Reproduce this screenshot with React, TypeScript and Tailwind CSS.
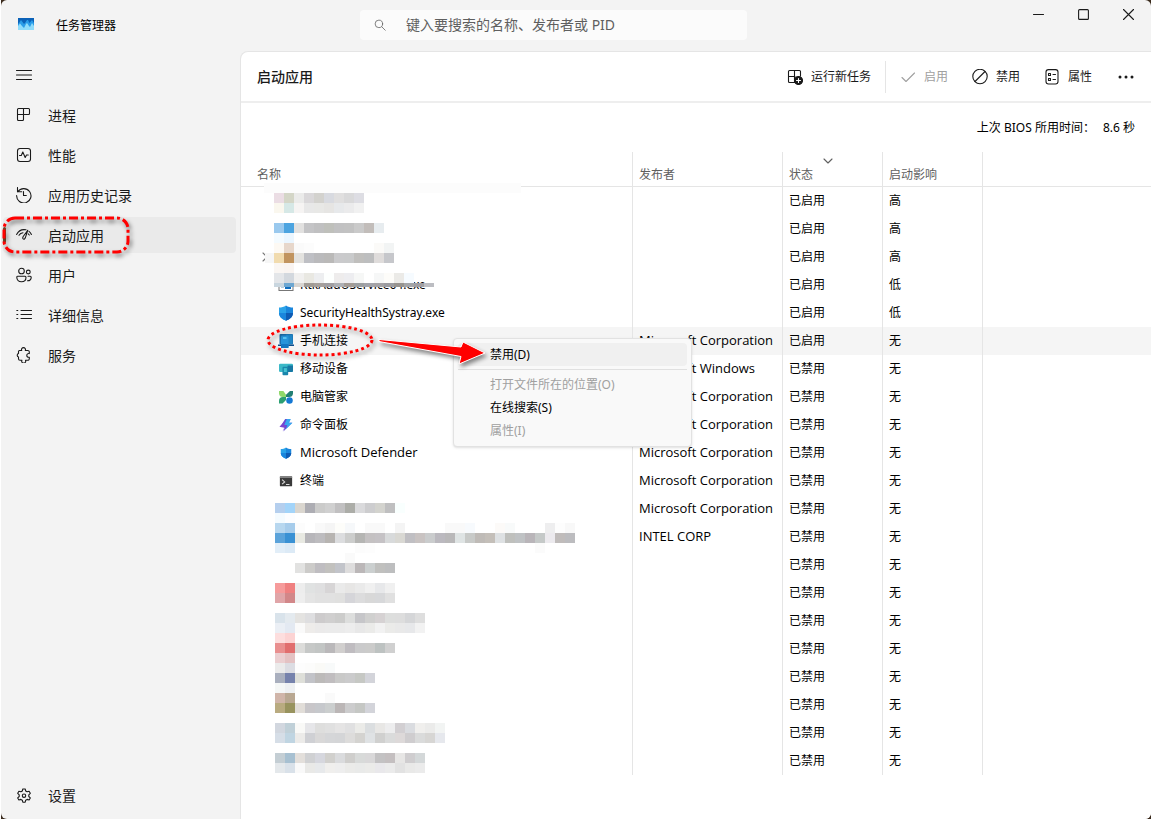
import type { ReactNode } from "react";

const stroke = {
  fill: "none",
  stroke: "currentColor",
  strokeWidth: 1.1,
  strokeLinecap: "round" as const,
  strokeLinejoin: "round" as const,
};

const Icon = ({ children, className = "size-4" }: { children: ReactNode; className?: string }) => (
  <svg viewBox="0 0 16 16" className={`shrink-0 ${className}`} aria-hidden="true" {...stroke}>
    {children}
  </svg>
);

const navItems = [
  {
    label: "进程",
    icon: <path d="M2.5 1.5h10a1 1 0 0 1 1 1v4a1 1 0 0 1-1 1h-11M7.5 1.5v11a1 1 0 0 1-1 1h-4a1 1 0 0 1-1-1v-10a1 1 0 0 1 1-1" />,
  },
  {
    label: "性能",
    icon: (
      <>
        <rect x="1.5" y="1.5" width="13" height="13" rx="2.5" />
        <path d="M3.5 8.5h1.8L6.8 5l2.4 5.5 1.3-2.5h1.8" />
      </>
    ),
  },
  {
    label: "应用历史记录",
    icon: (
      <>
        <path d="M1.5 .5v4.300h4.300M1.8 4.8A7.200 7.200 0 1 1 .6 8.500" />
        <path d="M7.5 4.500v4h2.800" />
      </>
    ),
  },
  {
    label: "启动应用",
    active: true,
    icon: (
      <>
        <path d="M.6 7.500A8.800 8.800 0 0 1 10 2.800M13 4.300A8.800 8.800 0 0 1 15.400 7.500M3 8.300A5.500 5.500 0 0 1 7 5.800" />
        <path d="M11.800 3.200 7.200 9.500c-.8 1.300-.5 2.300.2 2.600.8.300 1.500-.2 1.900-1.300z" />
        <path d="M12.200 6.800l1.100 1.200" />
      </>
    ),
  },
  {
    label: "用户",
    icon: (
      <>
        <circle cx="5.5" cy="4" r="2.8" />
        <circle cx="12.3" cy="5" r="1.9" />
        <path d="M2 9.2h7a1 1 0 0 1 1 1c0 3-1.700 4.600-4.500 4.600S.8 13.200.8 10.200A1 1 0 0 1 2 9.200zM12 9.200h2.200a1 1 0 0 1 1 1c0 2.200-1.200 3.600-3.700 3.600" />
      </>
    ),
  },
  {
    label: "详细信息",
    icon: <path d="M5 3.500h10.500M5 7.500h10.500M5 11.500h10.500M.8 3.500h1M.8 7.500h1M.8 11.500h1" />,
  },
  {
    label: "服务",
    icon: <path d="M3.500 3.500h2.200a2 2 0 1 1 3.600 0h2.500a1.500 1.500 0 0 1 1.500 1.500v1.600a1.900 1.900 0 1 0 0 3.600v1.600a1.500 1.500 0 0 1-1.500 1.500H9.500a2 2 0 1 1-3.600 0H4a1.500 1.500 0 0 1-1.500-1.500V10a1.900 1.900 0 0 1 0-3.600V4.500a1 1 0 0 1 1-1z" />,
  },
];

const Shield = ({ className }: { className: string }) => (
  <svg viewBox="0 0 16 16" className={className} aria-hidden="true">
    <path d="M8 .5C6 2 3.500 2.600 1 2.600V8c0 3.600 3 6.300 7 7.700z" fill="#2ba3e8" />
    <path d="M8 .5c2 1.500 4.500 2.100 7 2.100V8c0 3.600-3 6.300-7 7.700z" fill="#1b86dc" />
    <path d="M1 8h7v7.700C4 14.300 1 11.600 1 8z" fill="#1b86dc" />
    <path d="M8 8h7c0 3.600-3 6.300-7 7.700z" fill="#0f5cb4" />
  </svg>
);

const appIcons: Record<string, ReactNode> = {
  exe: (
    <svg viewBox="0 0 16 16" className="size-4" aria-hidden="true">
      <rect x="1" y="1" width="14" height="12.500" fill="#fff" stroke="#777" />
      <rect x="3" y="4" width="3" height="7" fill="#b8cfe0" />
      <rect x="7" y="4" width="6" height="8" fill="#0f6cbd" />
    </svg>
  ),
  security: <Shield className="size-4" />,
  defender: <Shield className="size-3" />,
  phone: (
    <svg viewBox="0 0 16 16" className="size-4" aria-hidden="true">
      <rect x="1.500" y="1" width="13.500" height="10.500" rx="1" fill="#1c6fae" />
      <path d="M8 1.500h6.500V11H8z" fill="#1f86c6" />
      <path d="M0 11.500h16V13H0z" fill="#0e4f8c" />
      <rect x="3" y="2.500" width="7.500" height="12.500" rx="1" fill="#2794da" />
      <rect x="5" y="4" width="3.500" height="2" fill="#59c3f2" />
      <path d="M3 11h7.500v4H3z" fill="#1377c2" />
    </svg>
  ),
  mobile: (
    <svg viewBox="0 0 16 16" className="size-3.5" aria-hidden="true">
      <rect x="0" y="2" width="16" height="9.500" rx="1.500" fill="#3cb9c8" />
      <path d="M10 4h6v6a1.500 1.500 0 0 1-1.500 1.500H8z" fill="#1878a4" />
      <rect x="4" y="5.500" width="6.500" height="9.500" rx="1" fill="#1986ac" />
      <rect x="5.500" y="7" width="3.500" height="4.500" fill="#45c3d0" />
    </svg>
  ),
  manager: (
    <svg viewBox="0 0 16 16" className="size-3.5" aria-hidden="true">
      <path d="M0 1h5l3 4.500v2.600H4.500A4.500 4.500 0 0 1 0 4z" fill="#8fd86a" />
      <path d="M16 1h-3.500L8 5.500v2.600h3.500A4.500 4.500 0 0 0 16 4z" fill="#237f74" />
      <path d="M0 15.500V12.500a4.500 4.500 0 0 1 4.500-4.500H8v3.500l-4 4z" fill="#2b9f72" />
      <circle cx="12" cy="12" r="3.700" fill="#1478d4" />
    </svg>
  ),
  palette: (
    <svg viewBox="0 0 16 16" className="size-3.5" aria-hidden="true">
      <path d="M7 1h6l-2 4.500h4L5 15.500l2-5.500H1.500z" fill="#6350d8" />
      <path d="M9 1h4.500l-2 4.500h4l-7.500 7L9.500 8H6z" fill="#38a8ee" />
      <path d="M.5 10 7 3 5.500 8.500h3L4 15.500 6 11z" fill="#7b45cf" />
    </svg>
  ),
  terminal: (
    <svg viewBox="0 0 16 16" className="size-3.5" aria-hidden="true">
      <rect x="1" y="2.500" width="14" height="11.500" rx="1" fill="#3a3a3a" />
      <path d="M1 2.500h14v2H1z" fill="#888" />
      <path d="m3.500 6.500 3 2.500-3 2.500M8 12h4" fill="none" stroke="#ddd" strokeWidth="1.200" />
    </svg>
  ),
};

type Row = { name?: string; icon?: string; publisher?: string; enabled?: boolean; impact: string; selected?: boolean };

const MS = "Microsoft Corporation";

const rows: Row[] = [
  { enabled: true, impact: "高" },
  { enabled: true, impact: "高" },
  { enabled: true, impact: "高" },
  { name: "RtkAudUService64.exe", icon: "exe", enabled: true, impact: "低" },
  { name: "SecurityHealthSystray.exe", icon: "security", enabled: true, impact: "低" },
  { name: "手机连接", icon: "phone", publisher: MS, enabled: true, impact: "无", selected: true },
  { name: "移动设备", icon: "mobile", publisher: "Microsoft Windows", impact: "无" },
  { name: "电脑管家", icon: "manager", publisher: MS, impact: "无" },
  { name: "命令面板", icon: "palette", publisher: MS, impact: "无" },
  { name: "Microsoft Defender", icon: "defender", publisher: MS, impact: "无" },
  { name: "终端", icon: "terminal", publisher: MS, impact: "无" },
  { publisher: MS, impact: "无" },
  { publisher: "INTEL CORP", impact: "无" },
  ...Array.from({ length: 8 }, () => ({ impact: "无" })),
];

// Redaction blocks: [line, colours from left to right], "." leaves a block clear
const topBlocks: [number, string][] = [
  [0, "ebdde4 d4d6c7 ebebea dad8da d3d2ce d8dae0 e0dfdf d9d9da dddde3"],
  [1, "faf7ee d6e8e6 f6f4f3 e8e8e8 e8e8e6 e6e5e3 e7e9eb ebebec f1f1f1"],
  [3, "9ac9ee 4ca4e0 e2e1e0 c4c4c6 c0c0c1 bfc0bb c1c1c2 c2c2c2 cacaca c2bdba e7ecef"],
  [4, "f4fbff ebf6ff"],
  [5, "fdf9f3 e7d7cb fafafa fcfcfc . . . . . . fbfaf8 f2f4f4"],
  [6, "f1dbae c1945f e3e2df bebfc4 bababc bab9b8 cacacc c9cacb c0bfbd bdbebf dfdcdb c6c7cb"],
  [7, "faf6f3 f9f4f1"],
  [8, "e4e6e9 d3d8de f1f0ef e9e8e2 edeef0 fdfffe eeecec ededf0 f6f7f6 ffffff f6f7f7 fdfcf9 ebeae7 f6fbff"],
  [9, "c9d6df 6ea7d1 d8d5d1 a09b95 a6a09c a19fa2 aeb0b4 a39c96 9c9fa1 a2a3a9 a4a2a5 9c9ca0 97948f a3a5a8 a09fa3 bcbdc2"],
];

const bottomBlocks: [number, string][] = [
  [0, "b5cfee a3d4f9 dad6cf adadb3 cbcbca d0d0d0 c1c0c1 acada8 dadadc cdcdcf d3d3ce bfbfc0 f9fffe"],
  [1, "f4fbff fcfdff"],
  [2, "b7d7ef a6cceb fcfcfc . f9f9f9 f5f5f5 fdfdfa f6f8fa . f9f9f9 f9f9f9 . f4f4f4 . . . . f9f9f9 f9f9f9 f7fafd . . fcfaf8 f8fafa . . . eeeeef fdfdfd f8f8f8"],
  [3, "5ba3da 3991d4 e8e9e2 b7b6ba bdbcbf b7b4b1 dcdddf cccdcc b5b5b3 c4c1c2 c5c2c5 d8dadb d9d8d3 c0bfc3 c9c3c2 cacccd bbb9bf b9b8b9 dfe4e4 c8cac8 bfbbb7 c4bfb9 dee1e3 bfc0bd bfc2c4 b9b5b9 c5c9c8 eceaee c0bcbb bcbcbf"],
  [4, "e2eef8 dceaf6 . . . . . . fcfcfc fdfdfd . . . . . . . . . . . . . . . . fbfbfb"],
  [5, ". . . . . . . fafafa"],
  [6, ". . e2e2e1 cccbc9 bfbdc1 c2c1be c2c4ca dedddd bbb7b8 cbcfcf c0c0be bdbebf"],
  [8, "f69b9b ef8080 ededed e0e2e2 dfdfe0 d7d5d6 eaeaea e7e6e5 eaeaea f0f0f0 e7e8ea f0f0f0"],
  [9, "e0a5a8 d28789 eeeeee e4e4e4 e1e1e1 e1e1e1 e0e0df d5d5d9 dcdcdd d8d8d8 d7d8da e0e0e0"],
  [11, "d9e3eb e4eaef e4e3e1 dedee0 cdcbcc d0cfcf cccccb dddedd c6c6c9 d0d0cf d6d2d3 dddedd dddddd d5d6d8 dedede"],
  [12, "ebeff5 e3e9f2 fafafa eeecea ebeaea ebebeb ebebeb ededed e8e8e8 ebebe9 f2f2f2 ebebe9 e9e9e9 e7e8ea f2f2f2"],
  [13, "fddede fcd3d3"],
  [14, "e98f8f e16e6e dcdcda c6c8c7 c2c5c4 bab8ba d1cfce bfbcc0 cacacb cbcbca bdc2c1 d0d0d0"],
  [15, "ebcfd1 e4c2c3"],
  [16, "ebebeb dcdde3 fdfdfd fcfcfb fafaf7 f8fafa"],
  [17, "a9afbe 7682ac dedfd9 c2c3c8 bcbab9 c0bdbf c9c9c8 cbcbcc c6c8c4 d3d4da"],
  [18, "f5f7f6 eef0f2"],
  [19, "d0b5a9 b9a892 . . . fafafa"],
  [20, "b9ab80 98935e e1ddd8 c8c6c9 c6c8cc cbcece bbb6b6 cccccd c5c7c4 d3d4da"],
  [22, "d2d7df c0d0d8 f9f9f7 e6e6e9 dededd e0e0e0 e5e4e4 e0e0e1 ebebe8 dbdee0 e8e7e5 ededee d2cfd2 dadce0 f0efed ebebea f2f4f3"],
  [23, "d6dee7 c0d5e2 ecebe9 cfd0d4 d9d8d8 d5d6d8 d4d5d7 dddcdb d4d3d0 dfe2e4 d0d0cf dadbdb ddd9d9 cfcdcf dadbdb d7d6d4 e6e8ed"],
  [25, "c4ced4 a7c0d1 e3dfdb d0d1d3 d6d7de d1d0cd dadbdd cfcecc d8dad9 d9d8d9 c3c2c3 c4bfc0 e7e6e5 cfcdcf d4d8d9"],
  [26, "e4e8eb d9e1e9 f9f9f9 e9e9e7 e7e9eb f0efed eeeeee ebebe9 e9eae9 ebebe9 e9e8eb ebebeb e2e2e2 e9e9e8 ebebeb"],
];

const Blocks = ({ lines, x, y, lastHeight = 10 }: { lines: [number, string][]; x: number; y: number; lastHeight?: number }) => (
  <g transform={`translate(${x} ${y})`} shapeRendering="crispEdges">
    {lines.map(([line, colors], i) =>
      colors.split(" ").map((color, col) =>
        color === "." ? null : (
          <rect
            key={`${line}-${col}`}
            x={col * 10}
            y={line * 10}
            width="10"
            height={i === lines.length - 1 ? lastHeight : 10}
            fill={`#${color}`}
          />
        )
      )
    )}
  </g>
);

const Redactions = () => (
  <svg width="391" height="630" className="pointer-events-none absolute top-0 left-0" aria-hidden="true">
    <rect x="23" y="31" width="257" height="10" fill="#fcfcfc" />
    <rect x="24" y="101" width="9" height="10" fill="#f6f6f6" />
    <Blocks lines={topBlocks} x={33} y={41} lastHeight={4} />
    <Blocks lines={bottomBlocks} x={34} y={351} />
  </svg>
);

const TitleBar = () => (
  <header className="flex h-[51px] shrink-0 items-start">
    <div className="flex h-[51px] w-[359px] items-center gap-[22px] pl-[17px]">
      <svg viewBox="0 0 16 12" className="mb-1 h-3 w-4" aria-hidden="true">
        <path d="M0 0h16v12H0z" fill="#0b62b8" />
        <path d="M0 6l1-1 2-3 3 4 1-1 2-3 1 0 1.500 3L14 2l2 3v7H0z" fill="#2a9ce8" />
        <path d="M0 8l2-2.500L4 8l2 2 2-4 1-1 2 3 1 1 2-4 2 3v4H0z" fill="#8fdcfb" />
      </svg>
      <h1 className="text-xs text-black">任务管理器</h1>
    </div>
    <label className="mt-2.5 flex h-[30px] w-[387px] min-w-0 items-center gap-5 rounded bg-[#fbfbfb] pl-3.5">
      <Icon className="size-3 text-[#666]">
        <circle cx="6.500" cy="6.500" r="5" />
        <path d="m10.500 10.500 4.500 4.500" />
      </Icon>
      <input
        type="search"
        aria-label="搜索"
        placeholder="键入要搜索的名称、发布者或 PID"
        className="min-w-0 flex-1 bg-transparent text-sm outline-none placeholder:text-[#5f5f5f]"
      />
    </label>
    <div className="ml-auto flex">
      <button type="button" aria-label="最小化" className="grid h-7 w-[45px] place-items-center">
        <svg width="11" height="11" {...stroke}><path d="M.5 5.500h10" /></svg>
      </button>
      <button type="button" aria-label="最大化" className="grid h-7 w-[45px] place-items-center">
        <svg width="11" height="11" {...stroke}><rect x=".6" y=".6" width="9.800" height="9.800" rx="1" /></svg>
      </button>
      <button type="button" aria-label="关闭" className="grid h-7 w-[45px] place-items-center">
        <svg width="11" height="11" {...stroke}><path d="m.5.5 10 10m0-10-10 10" /></svg>
      </button>
    </div>
  </header>
);

const Sidebar = () => (
  <aside className="flex w-[239px] shrink-0 flex-col pt-1 pb-[5px] text-sm">
    <button type="button" aria-label="菜单" className="flex h-10 w-12 items-center pl-[15px]">
      <Icon><path d="M.5 3.500h15M.5 8h15M.5 12.500h15" /></Icon>
    </button>
    <nav className="mt-0.5 flex flex-col gap-1 pr-1 pl-0.5">
      {navItems.map((item) => (
        <a
          key={item.label}
          href="#"
          aria-current={item.active ? "page" : undefined}
          className={`relative flex h-9 items-center gap-4 rounded pl-[13px] ${item.active ? "bg-[#eaeaea]" : ""}`}
        >
          <Icon>{item.icon}</Icon>
          <span className="pt-px">{item.label}</span>
          {item.active && (
            <>
              <span className="absolute top-2.5 left-0 h-4 w-[3px] rounded bg-[#7a4a2a]" />
              <svg
                width="136"
                height="48"
                className="absolute -top-1 -left-1 drop-shadow-[2px_3px_2px_rgba(0,0,0,0.5)]"
                aria-hidden="true"
              >
                <rect x="5" y="5" width="124" height="34" rx="11" fill="none" stroke="#f00" strokeWidth="3" strokeDasharray="9 3 3 3" />
              </svg>
            </>
          )}
        </a>
      ))}
    </nav>
    <a href="#" className="mt-auto flex h-9 items-center gap-4 pl-[15px]">
      <Icon>
        <path d="M6.800 1h2.400l.5 2 1.400.8 2-.6 1.200 2.100-1.500 1.500v1.700l1.500 1.400-1.200 2.100-2-.6-1.400.8-.5 2H6.800l-.5-2-1.400-.8-2 .6-1.200-2.100 1.500-1.400V6.800L1.700 5.300l1.200-2.100 2 .6L6.300 3z" />
        <circle cx="8" cy="7.700" r="1.700" />
      </Icon>
      设置
    </a>
  </aside>
);

const toolButton = "flex h-8 items-center gap-2 px-3";

const Toolbar = () => (
  <div className="flex h-[51px] items-center border-b-2 border-[#eee] pr-[3px] pl-4">
    <h2 className="text-sm font-medium">启动应用</h2>
    <div className="ml-auto flex items-center">
      <button type="button" className={toolButton}>
        <Icon>
          <path d="M7.500 13.500h-5a1 1 0 0 1-1-1v-10a1 1 0 0 1 1-1h10a1 1 0 0 1 1 1V7M7.500 1.500v12M1.500 7.500h6.500" />
          <circle cx="11.500" cy="11.500" r="4" fill="currentColor" />
          <path d="M11.500 9.500v4M9.500 11.500h4" stroke="#fff" />
        </Icon>
        运行新任务
      </button>
      <span className="mx-0.5 h-8 w-px bg-[#e5e5e5]" />
      <button type="button" disabled className={`${toolButton} text-[#a0a0a0]`}>
        <Icon><path d="m2 8.500 4 4 8.500-8.500" /></Icon>
        启用
      </button>
      <button type="button" className={toolButton}>
        <Icon>
          <circle cx="8" cy="7.500" r="7.200" />
          <path d="M13 2.500 3 12.500" />
        </Icon>
        禁用
      </button>
      <button type="button" className={toolButton}>
        <Icon>
          <rect x="2" y=".6" width="12" height="14.400" rx="2.500" />
          <path d="M4.500 4.500h2v2h-2zM4.500 9.500h2v2h-2zM9 5.500h2.500M9 10.500h2.500" />
        </Icon>
        属性
      </button>
      <button type="button" aria-label="更多" className="grid h-8 w-11 place-items-center">
        <svg width="16" height="4" fill="currentColor"><circle cx="2" cy="2" r="1.500" /><circle cx="8" cy="2" r="1.500" /><circle cx="14" cy="2" r="1.500" /></svg>
      </button>
    </div>
  </div>
);

const menuItem = "flex w-full items-center pl-8 text-left";

const ContextMenu = () => (
  <div
    role="menu"
    className="absolute top-[186px] left-[212px] w-[239px] rounded border border-[#e2e2e2] bg-[#f9f9f9] p-1 text-black shadow-sm"
  >
    <button type="button" role="menuitem" className={`${menuItem} h-[23px] rounded bg-[#f0f0f0]`}>禁用(D)</button>
    <hr className="my-[3px] border-[#e0e0e0]" />
    <button type="button" role="menuitem" disabled className={`${menuItem} h-[23px] text-[#a0a0a0]`}>打开文件所在的位置(O)</button>
    <button type="button" role="menuitem" className={`${menuItem} h-[23px]`}>在线搜索(S)</button>
    <button type="button" role="menuitem" disabled className={`${menuItem} h-[23px] text-[#a0a0a0]`}>属性(I)</button>
  </div>
);

const Annotations = () => (
  <svg
    width="260"
    height="60"
    className="pointer-events-none absolute top-[160px] left-[20px] drop-shadow-[2px_3px_2px_rgba(0,0,0,0.45)]"
    aria-hidden="true"
  >
    <ellipse cx="59" cy="28" rx="52" ry="15" fill="none" stroke="#f00" strokeWidth="3" strokeDasharray="3 3" />
    <path d="M118 27.500 200 35 202 30 224 41 198 52 200 44.500 118 29.500z" fill="#f00" stroke="#fff" />
  </svg>
);

const th = "h-[35px] border-r border-b border-[#e5e5e5] pb-[3px] pl-1.5 text-left align-bottom font-normal leading-4";
const td = "border-r border-[#e5e5e5] pl-1.5";
const latin = "font-['Open_Sans','Noto_Sans_CJK_SC',sans-serif] text-[13px]";

const StartupTable = () => (
  <div className="relative">
    <table className="w-full table-fixed border-separate border-spacing-0 text-black">
      <colgroup>
        <col className="w-[392px]" />
        <col className="w-[150px]" />
        <col className="w-[100px]" />
        <col className="w-[100px]" />
        <col />
      </colgroup>
      <thead className="text-[#5f5f5f]">
        <tr>
          <th className="h-[35px] border-r border-b border-[#e5e5e5] pb-[3px] pl-4 text-left align-bottom leading-4 font-normal">名称</th>
          <th className={th}>发布者</th>
          <th className={th} aria-sort="descending">
            <svg width="10" height="6" className="mb-[3px] ml-[34px]" {...stroke}><path d="m1 1 4 4 4-4" /></svg>
            状态
          </th>
          <th className={th}>启动影响</th>
          <th className="border-b border-[#e5e5e5]" aria-label="其他" />
        </tr>
      </thead>
      <tbody>
        {rows.map((row, i) => (
          <tr key={i} className={row.selected ? "h-7 bg-[#f5f5f5]" : "h-7"}>
            <td className="border-r border-[#e5e5e5] pl-[37px]">
              {row.name && (
                <span className="flex items-center gap-1.5">
                  <span className="grid size-4 place-items-center">{row.icon && appIcons[row.icon]}</span>
                  <span className={row.name.startsWith("Microsoft") ? latin : ""}>{row.name}</span>
                </span>
              )}
              {i === 2 && (
                <svg width="6" height="10" className="-ml-4 text-[#777]" {...stroke}><path d="m1 1 4 4-4 4" /></svg>
              )}
            </td>
            <td className={`${td} ${latin}`}>{row.publisher}</td>
            <td className={td}>{row.enabled ? "已启用" : "已禁用"}</td>
            <td className={td}>{row.impact}</td>
            <td />
          </tr>
        ))}
      </tbody>
    </table>
    <Redactions />
    <ContextMenu />
    <Annotations />
  </div>
);

export default function App() {
  return (
    <div className="flex min-h-screen border-l border-white bg-[#3a2a1c] font-['Noto_Sans','Noto_Sans_CJK_SC',sans-serif] text-xs text-[#1a1a1a]">
      <div className="flex min-w-0 flex-1 flex-col overflow-hidden rounded-md bg-[#f3f3f3]">
        <TitleBar />
        <div className="flex flex-1">
          <Sidebar />
          <main className="min-w-0 flex-1 rounded-tl-lg border-t border-l border-[#e5e5e5] bg-white">
            <Toolbar />
            <p className="flex h-[49px] items-center justify-end gap-2 pr-4 text-black">
              <span>上次 BIOS 所用时间：</span>
              <span>8.6 秒</span>
            </p>
            <StartupTable />
          </main>
        </div>
      </div>
    </div>
  );
}
